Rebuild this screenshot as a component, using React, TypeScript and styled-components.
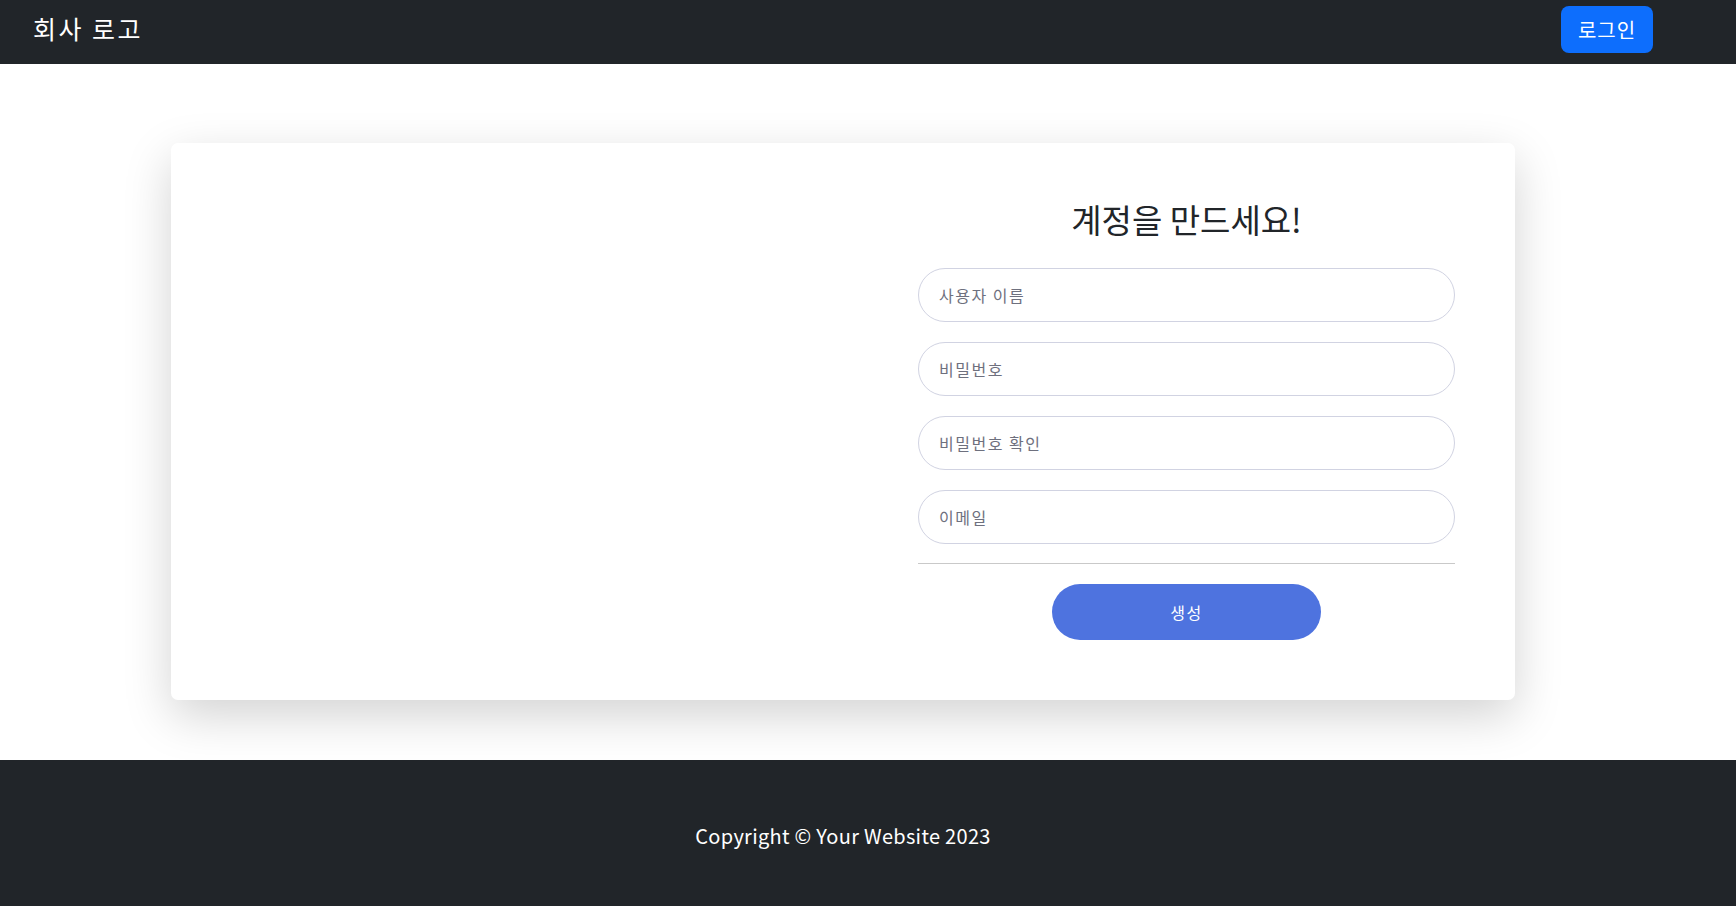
import styled, { createGlobalStyle } from 'styled-components';

const GlobalStyle = createGlobalStyle`
    * { box-sizing: border-box; }
    body {
        margin: 0;
        font-family: "Noto Sans CJK KR", "Noto Sans", sans-serif;
        background: #fff;
    }
`;

const Page = styled.div`
    min-height: 906px;
    display: flex;
    flex-direction: column;
`;

const NavBar = styled.nav`
    height: 64px;
    background: #212529;
    display: flex;
    align-items: flex-start;
    justify-content: space-between;
    padding: 6px 83px 0 33px;
`;

const Brand = styled.a`
    color: #fff;
    font-size: 25px;
    letter-spacing: 2.5px;
    line-height: 45px;
    text-decoration: none;
`;

const LoginButton = styled.button`
    height: 47px;
    width: 92px;
    border: none;
    border-radius: 8px;
    background: #0d6efd;
    color: #fff;
    font-family: inherit;
    font-size: 20px;
    letter-spacing: 1px;
    cursor: pointer;
`;

const Main = styled.main`
    flex: 1;
    display: flex;
    justify-content: center;
    padding: 79px 50px 60px 0;
`;

const Card = styled.div`
    width: 1344px;
    background: #fff;
    border-radius: 7px;
    box-shadow: 0 16px 48px rgba(0, 0, 0, 0.175);
    display: flex;
`;

const ImagePane = styled.div`
    flex: 1;
`;

const FormPane = styled.form`
    width: 537px;
    margin-right: 60px;
    padding: 57px 0 60px;
    display: flex;
    flex-direction: column;
`;

const Title = styled.h4`
    margin: 0 0 30px;
    font-size: 33px;
    font-weight: 400;
    line-height: 38px;
    color: #212529;
    text-align: center;
`;

const Field = styled.input`
    height: 54px;
    margin-bottom: 20px;
    border: 1px solid #d1d3e2;
    border-radius: 100px;
    padding: 0 20px;
    font-family: inherit;
    font-size: 16px;
    letter-spacing: 1.5px;
    outline: none;
    &::placeholder { color: #6e707e; }
    &:last-of-type { margin-bottom: 19px; }
`;

const Divider = styled.hr`
    margin: 0 0 20px;
    border: none;
    border-top: 1px solid #c9c9c9;
`;

const SubmitButton = styled.button`
    align-self: center;
    width: 269px;
    height: 56px;
    border: none;
    border-radius: 100px;
    background: #4e73df;
    color: #fff;
    font-family: inherit;
    font-size: 16px;
    letter-spacing: 1.5px;
    cursor: pointer;
`;

const Footer = styled.footer`
    height: 146px;
    background: #212529;
    color: #fff;
    display: flex;
    align-items: center;
    justify-content: center;
    padding: 4px 50px 0 0;
    font-size: 20px;
    letter-spacing: 0.3px;
`;

const App = () => {
    return (
        <Page>
            <GlobalStyle />
            <NavBar>
                <Brand href="#">회사 로고</Brand>
                <LoginButton type="button">로그인</LoginButton>
            </NavBar>
            <Main>
                <Card>
                    <ImagePane />
                    <FormPane onSubmit={(e) => { e.preventDefault(); }}>
                        <Title>계정을 만드세요!</Title>
                        <Field type="text" placeholder="사용자 이름" />
                        <Field type="password" placeholder="비밀번호" />
                        <Field type="password" placeholder="비밀번호 확인" />
                        <Field type="email" placeholder="이메일" />
                        <Divider />
                        <SubmitButton type="submit">생성</SubmitButton>
                    </FormPane>
                </Card>
            </Main>
            <Footer>Copyright © Your Website 2023</Footer>
        </Page>
    );
};

export default App;
